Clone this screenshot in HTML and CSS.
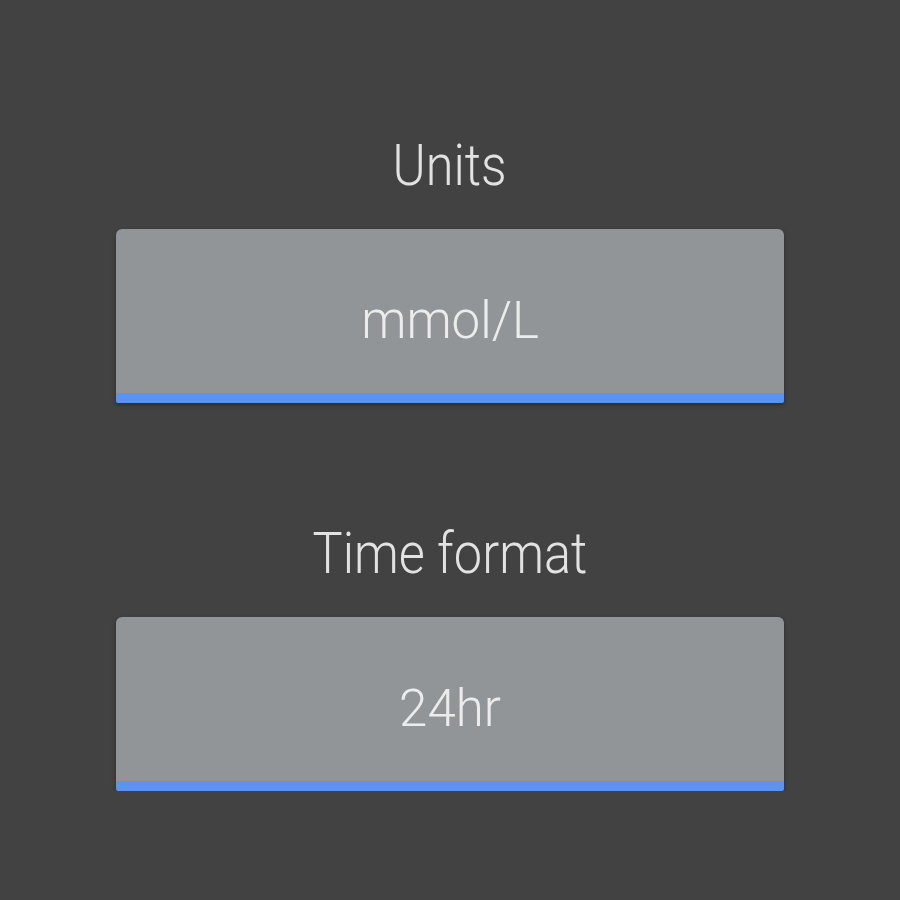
FILE: index.html
```html
<!DOCTYPE html>
<html>
<head>
<meta charset="utf-8">
<link rel="stylesheet" href="styles.css">
</head>
<body>
<main class="settings">
  <section class="setting">
    <h2 class="setting-title"><span class="condensed">Units</span></h2>
    <button class="setting-button">mmol/L</button>
  </section>
  <section class="setting">
    <h2 class="setting-title"><span class="condensed">Time format</span></h2>
    <button class="setting-button">24hr</button>
  </section>
</main>
</body>
</html>
```

FILE: styles.css
```css
html, body {
  margin: 0;
  padding: 0;
  background: #424242;
}
.settings {
  display: flex;
  flex-direction: column;
  align-items: center;
  padding-top: 130px;
  gap: 115px;
  font-family: Roboto, "Liberation Sans", sans-serif;
}
.setting {
  display: flex;
  flex-direction: column;
  align-items: center;
  gap: 29px;
}
.setting-title {
  margin: 0;
  font-size: 58px;
  line-height: 70px;
  font-weight: 300;
  color: #e2e2e2;
}
.condensed {
  display: inline-block;
  transform: scaleX(0.87);
}
.setting-button {
  box-sizing: border-box;
  width: 668px;
  height: 174px;
  margin: 0;
  padding: 62px 0 42px;
  border: none;
  border-bottom: 10px solid #5b93ee;
  border-radius: 6px 6px 2px 2px;
  background: #919597;
  box-shadow: 0 2px 4px rgba(0,0,0,0.35);
  font-family: Roboto, "Liberation Sans", sans-serif;
  font-size: 51px;
  line-height: 60px;
  font-weight: 300;
  color: #ececec;
  display: flex;
  justify-content: center;
  align-items: flex-start;
}
```
